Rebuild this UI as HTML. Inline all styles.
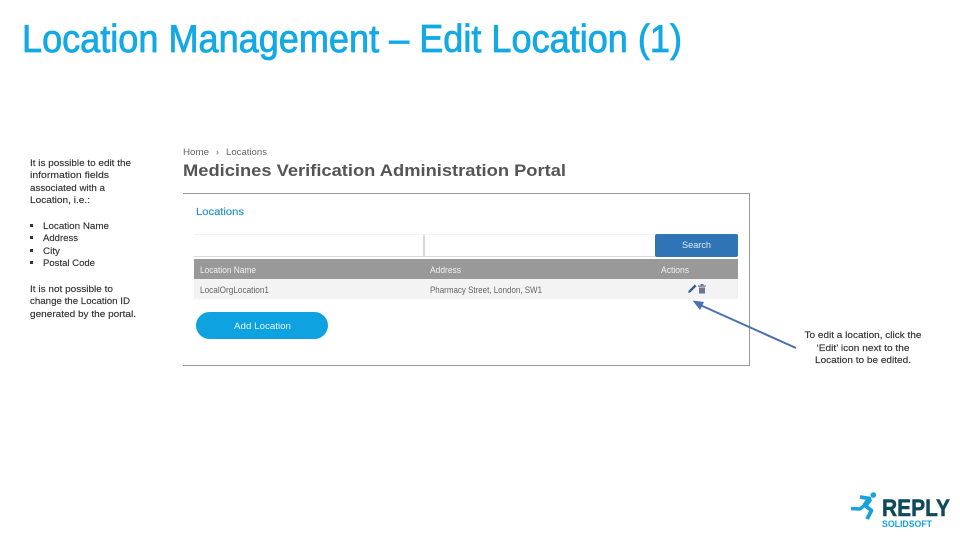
<!DOCTYPE html>
<html><head><meta charset="utf-8"><style>
html,body{margin:0;padding:0;background:#fff;width:960px;height:540px;overflow:hidden}
svg{display:block}
text{font-family:"Liberation Sans",sans-serif}
.b{font-size:9.5px;fill:#333;stroke:#333;stroke-width:.15px}
.t{font-size:9px;fill:#666}
.w{font-size:9px;fill:#f0f0f0}
</style></head><body>
<svg width="960" height="540" viewBox="0 0 960 540" xmlns="http://www.w3.org/2000/svg">
<text x="22" y="52" font-size="39" fill="#12a9e4" stroke="#12a9e4" stroke-width=".8" textLength="660" lengthAdjust="spacingAndGlyphs">Location Management – Edit Location (1)</text>

<text class="b" x="30" y="166" textLength="101" lengthAdjust="spacingAndGlyphs">It is possible to edit the</text>
<text class="b" x="30" y="178" textLength="79" lengthAdjust="spacingAndGlyphs">information fields</text>
<text class="b" x="30" y="191" textLength="75" lengthAdjust="spacingAndGlyphs">associated with a</text>
<text class="b" x="30" y="203" textLength="60" lengthAdjust="spacingAndGlyphs">Location, i.e.:</text>
<rect x="30" y="224" width="3" height="3" fill="#333"/>
<rect x="30" y="236" width="3" height="3" fill="#333"/>
<rect x="30" y="249" width="3" height="3" fill="#333"/>
<rect x="30" y="261" width="3" height="3" fill="#333"/>
<text class="b" x="43" y="229" textLength="66" lengthAdjust="spacingAndGlyphs">Location Name</text>
<text class="b" x="43" y="241" textLength="35" lengthAdjust="spacingAndGlyphs">Address</text>
<text class="b" x="43" y="254" textLength="17" lengthAdjust="spacingAndGlyphs">City</text>
<text class="b" x="43" y="266" textLength="52" lengthAdjust="spacingAndGlyphs">Postal Code</text>
<text class="b" x="30" y="292" textLength="83" lengthAdjust="spacingAndGlyphs">It is not possible to</text>
<text class="b" x="30" y="304" textLength="100" lengthAdjust="spacingAndGlyphs">change the Location ID</text>
<text class="b" x="30" y="317" textLength="106" lengthAdjust="spacingAndGlyphs">generated by the portal.</text>

<text class="t" x="183" y="155" textLength="26" lengthAdjust="spacingAndGlyphs">Home</text>
<text class="t" x="216" y="155">›</text>
<text class="t" x="226" y="155" textLength="41" lengthAdjust="spacingAndGlyphs">Locations</text>
<text x="183" y="176" font-size="16.500" font-weight="bold" fill="#555" textLength="383" lengthAdjust="spacingAndGlyphs">Medicines Verification Administration Portal</text>

<rect x="183" y="193" width="567" height="1" fill="#999"/>
<rect x="183" y="365" width="567" height="1" fill="#999"/>
<rect x="749" y="193" width="1" height="173" fill="#999"/>
<text x="196" y="215" font-size="10.500" fill="#2f93c6" stroke="#2f93c6" stroke-width=".2" textLength="48" lengthAdjust="spacingAndGlyphs">Locations</text>

<rect x="194" y="256" width="461" height="1" fill="#d8d8d8"/>
<rect x="194" y="234" width="461" height="1" fill="#f2f2f2"/>
<rect x="423" y="235" width="2" height="22" fill="#d8d8d8"/>
<rect x="655" y="234" width="83" height="23" rx="2" fill="#2f74b5"/>
<text x="682" y="248" font-size="9" fill="#dfe9f3" textLength="29" lengthAdjust="spacingAndGlyphs">Search</text>
<rect x="194" y="259" width="544" height="20" fill="#999"/>
<text class="w" x="200" y="273" textLength="56" lengthAdjust="spacingAndGlyphs">Location Name</text>
<text class="w" x="430" y="273" textLength="31" lengthAdjust="spacingAndGlyphs">Address</text>
<text class="w" x="661" y="273" textLength="28" lengthAdjust="spacingAndGlyphs">Actions</text>
<rect x="194" y="279" width="544" height="20" fill="#f3f3f3"/>
<text class="t" x="200" y="293" textLength="69" lengthAdjust="spacingAndGlyphs">LocalOrgLocation1</text>
<text class="t" x="430" y="293" textLength="112" lengthAdjust="spacingAndGlyphs">Pharmacy Street, London, SW1</text>
<path d="M688 293l.8-2.500 6-6 1.700 1.700-6 6z" fill="#2f5f8a"/>
<path d="M698 285.500h8v1.200h-8zM700.500 284h3v1.500h-3zM699 287.500h6v6h-6z" fill="#6e7492"/>
<rect x="196" y="312" width="132" height="27" rx="13.500" fill="#0ea2e0"/>
<text x="234" y="329" font-size="9.500" fill="#e4f4fb" textLength="57" lengthAdjust="spacingAndGlyphs">Add Location</text>

<path d="M796 348L699 304.500" stroke="#4a70ad" stroke-width="2" fill="none"/>
<path d="M692.500 300.500L704 302L700 310z" fill="#4a70ad"/>

<text class="b" x="863" y="338" text-anchor="middle" textLength="117" lengthAdjust="spacingAndGlyphs">To edit a location, click the</text>
<text class="b" x="863" y="351" text-anchor="middle" textLength="93" lengthAdjust="spacingAndGlyphs">‘Edit’ icon next to the</text>
<text class="b" x="863" y="363" text-anchor="middle" textLength="96" lengthAdjust="spacingAndGlyphs">Location to be edited.</text>

<circle cx="873.300" cy="495" r="2.800" fill="#17a2dc"/>
<path d="M860 497L869.500 498.500L865 505.500L871.500 510.500L867 519" fill="none" stroke="#17a2dc" stroke-width="3.800" stroke-linejoin="round"/>
<path d="M866 504L860 509L851 508.500" fill="none" stroke="#17a2dc" stroke-width="3.400" stroke-linejoin="round"/>
<path d="M870 498.500L865 505.500" fill="none" stroke="#17a2dc" stroke-width="5.500"/>
<text x="882" y="516" font-size="24" font-weight="bold" fill="#0f4a5c" stroke="#0f4a5c" stroke-width=".5" textLength="68" lengthAdjust="spacingAndGlyphs">REPLY</text>
<text x="882" y="527" font-size="9.500" font-weight="bold" fill="#17a2dc" textLength="50" lengthAdjust="spacingAndGlyphs">SOLIDSOFT</text>
</svg>
</body></html>
